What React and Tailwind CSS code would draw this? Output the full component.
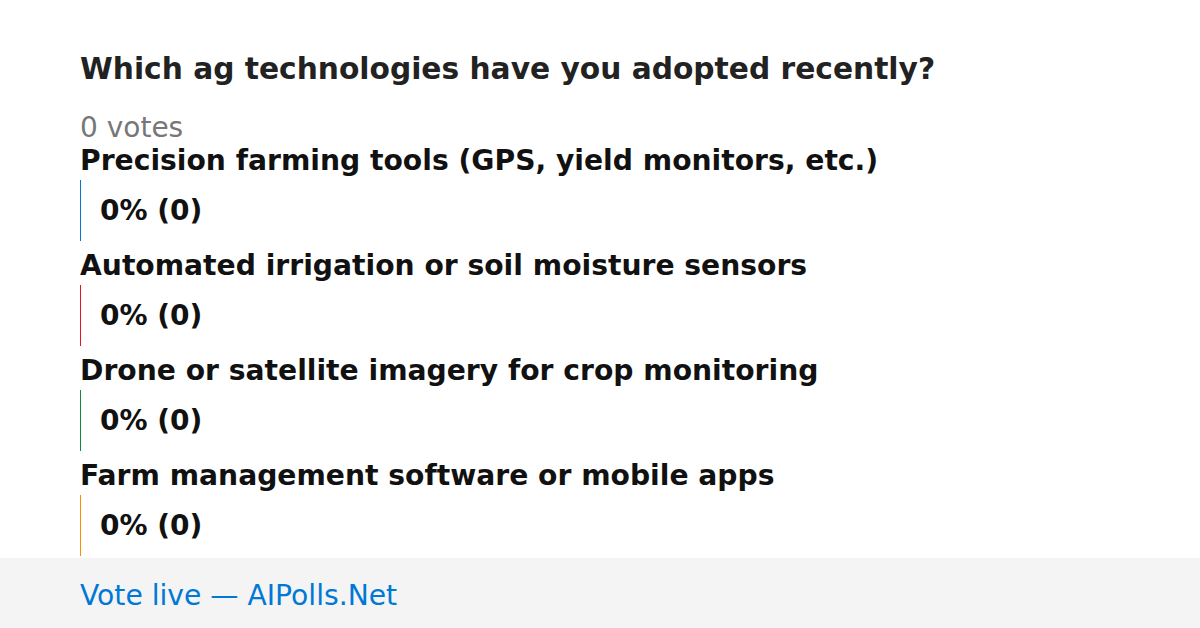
const options = [
  { label: 'Precision farming tools (GPS, yield monitors, etc.)', color: 'border-[#0078d4]' },
  { label: 'Automated irrigation or soil moisture sensors', color: 'border-[#e81123]' },
  { label: 'Drone or satellite imagery for crop monitoring', color: 'border-[#10893e]' },
  { label: 'Farm management software or mobile apps', color: 'border-[#ff8c00]' },
];

export default function App() {
  return (
    <div className="w-[1200px] h-[628px] bg-white flex flex-col overflow-hidden font-['DejaVu_Sans',sans-serif]">
      <div className="flex-1 min-h-0 overflow-hidden px-20 pt-[51px]">
        <h1 className="text-[29.7px] leading-[36px] font-bold text-[#222]">
          Which ag technologies have you adopted recently?
        </h1>
        <div className="mt-[26px] mb-[3px] text-[28px] leading-[30px] text-[#777]">0 votes</div>
        {options.map((o) => (
          <div key={o.label}>
            <div className="text-[28.2px] leading-[30px] font-bold text-[#111]">{o.label}</div>
            <div className={`mt-[4px] mb-[10px] h-[61px] border-l ${o.color} flex items-center pl-[19px]`}>
              <span className="text-[28px] leading-[30px] font-bold text-[#111]">0% (0)</span>
            </div>
          </div>
        ))}
      </div>
      <div className="h-[70px] shrink-0 bg-[#f4f4f4] px-20 pt-[6px] flex items-center">
        <span className="text-[28.2px] leading-[30px] text-[#0078d4]">Vote live — AIPolls.Net</span>
      </div>
    </div>
  );
}
